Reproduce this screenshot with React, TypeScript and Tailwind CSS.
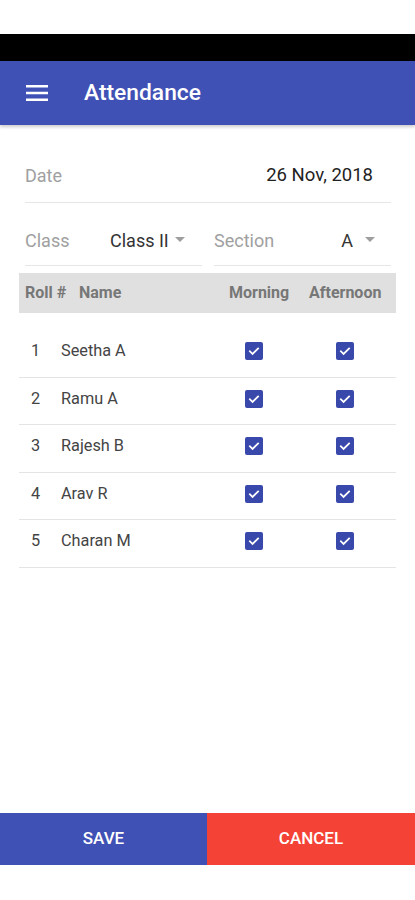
import React from "react";

// ── Data ───────────────────────────────────────────────────────────────────────

const STUDENTS = [
  { roll: 1, name: "Seetha A" },
  { roll: 2, name: "Ramu A" },
  { roll: 3, name: "Rajesh B" },
  { roll: 4, name: "Arav R" },
  { roll: 5, name: "Charan M" },
];

// ── Bits ───────────────────────────────────────────────────────────────────────

function Caret() {
  return (
    <span className="inline-block w-0 h-0 border-l-[5.5px] border-r-[5.5px] border-t-[5.5px] border-l-transparent border-r-transparent border-t-[#9e9e9e]" />
  );
}

function Check() {
  return (
    <span className="flex items-center justify-center w-[18px] h-[18px] rounded-[2px] bg-[#3949ab]">
      <svg width="14" height="14" viewBox="0 0 24 24" fill="none">
        <path d="M5 12.5l4.5 4.5L19 7.5" stroke="white" strokeWidth="3" strokeLinecap="square" />
      </svg>
    </span>
  );
}

// ── App ────────────────────────────────────────────────────────────────────────

export default function App() {
  return (
    <div className="w-[415px] h-[900px] bg-white flex flex-col font-['Roboto',sans-serif] overflow-hidden">
      <div className="h-[34px] shrink-0 bg-white" />
      <div className="h-[27px] shrink-0 bg-black" />

      {/* App bar */}
      <div className="h-[64px] shrink-0 bg-[#3f51b5] flex items-center shadow-[0_2px_3px_rgba(0,0,0,0.2)]">
        <div className="w-[84px] pl-[26px] flex items-center">
          <svg width="22" height="16" viewBox="0 0 22 16">
            <rect x="0" y="0" width="22" height="2.5" fill="white" />
            <rect x="0" y="6.75" width="22" height="2.5" fill="white" />
            <rect x="0" y="13.5" width="22" height="2.5" fill="white" />
          </svg>
        </div>
        <h1 className="text-white text-[22.8px] font-medium">Attendance</h1>
      </div>

      {/* Form */}
      <div className="px-[25px] pt-[26px] pr-[24px]">
        <div className="flex items-center justify-between h-[52px] pb-[2px] border-b border-[#e6e6e6]">
          <span className="text-[18px] text-[#a0a0a0]">Date</span>
          <span className="text-[18.5px] text-[#222] pr-[18px]">26 Nov, 2018</span>
        </div>
        <div className="flex gap-[12px] mt-[13px]">
          <div className="flex-1 flex items-center h-[50px] border-b border-[#e6e6e6]">
            <span className="text-[18px] text-[#a0a0a0] w-[85px]">Class</span>
            <span className="text-[18px] text-[#333]">Class II</span>
            <span className="ml-[6px] mb-[2px] flex"><Caret /></span>
          </div>
          <div className="flex-1 flex items-center h-[50px] border-b border-[#e6e6e6]">
            <span className="text-[18px] text-[#a0a0a0] flex-1">Section</span>
            <span className="text-[18px] text-[#333]">A</span>
            <span className="ml-[12px] mr-[16px] mb-[2px] flex"><Caret /></span>
          </div>
        </div>
      </div>

      {/* Table */}
      <div className="mx-[19px] mt-[7px]">
        <div className="h-[40px] bg-[#e0e0e0] flex items-center text-[16px] font-bold text-[#777]">
          <span className="w-[60px] pl-[6px]">Roll #</span>
          <span className="flex-1">Name</span>
          <span className="w-[80px]">Morning</span>
          <span className="w-[87px]">Afternoon</span>
        </div>
        <div className="pt-[17px]">
          {STUDENTS.map((s) => (
            <div key={s.roll} className="h-[47.5px] flex items-center pb-[4px] border-b border-[#e4e4e4] text-[16.3px] text-[#444]">
              <span className="w-[42px] pl-[12px]">{s.roll}</span>
              <span className="flex-1">{s.name}</span>
              <span className="w-[91px] flex"><Check /></span>
              <span className="w-[60px] flex"><Check /></span>
            </div>
          ))}
        </div>
      </div>

      <div className="flex-1" />

      {/* Footer buttons */}
      <div className="h-[52px] flex shrink-0 mb-[35px]">
        <button className="w-[207px] bg-[#3f51b5] text-white text-[17px] font-medium uppercase">Save</button>
        <button className="flex-1 bg-[#f44336] text-white text-[17px] font-medium uppercase">Cancel</button>
      </div>
    </div>
  );
}
